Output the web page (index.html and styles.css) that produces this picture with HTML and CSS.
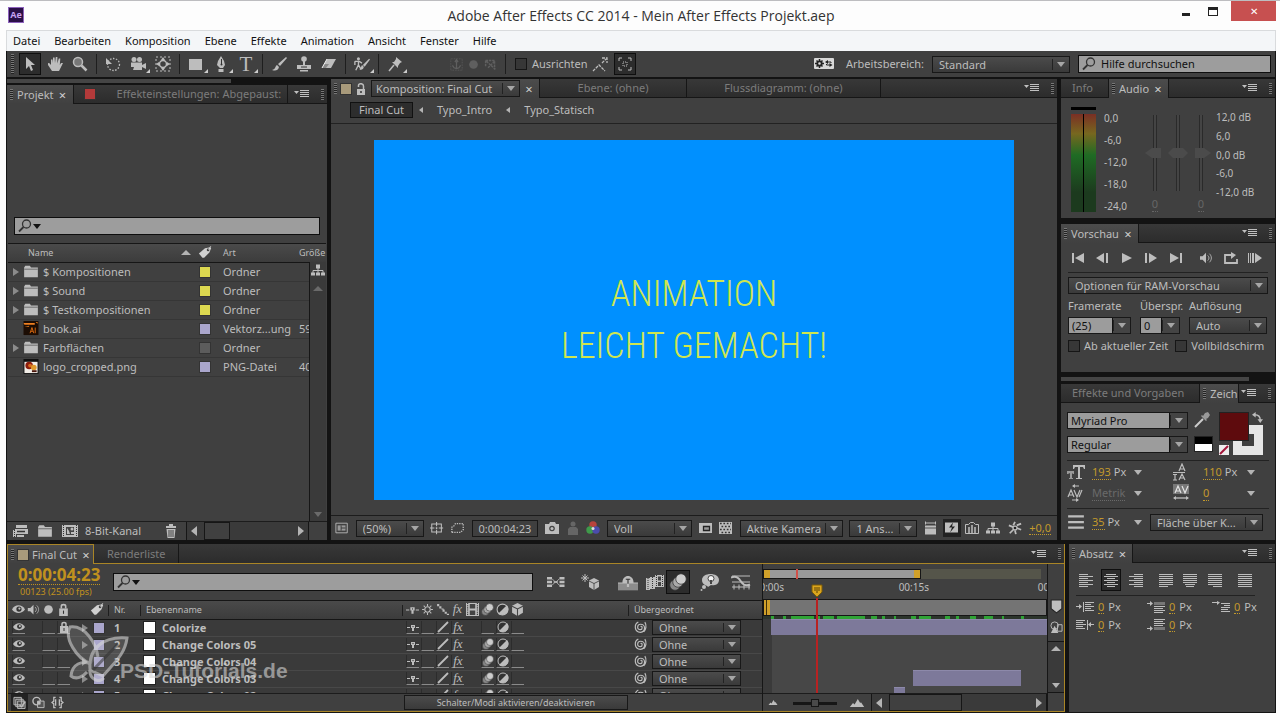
FILE: index.html
```html
<!DOCTYPE html>
<html lang="de">
<head>
	<meta charset="utf-8">
	<title>Adobe After Effects CC 2014 - Mein After Effects Projekt.aep</title>
	<link rel="stylesheet" href="styles.css">
</head>
<body>
	<!-- icon sprite -->
	<svg class="sprite" aria-hidden="true">
		<symbol id="i-arrow" viewBox="0 0 16 16"><path d="M4 1v12l3-3 2 5 2-1-2-5h4z"/></symbol>
		<symbol id="i-hand" viewBox="0 0 16 16"><path d="M5 15 1 9V7l1.500.3L4 9V3.500h1.500L6 7V1.500h1.600L8 7l.8-6h1.600L10.300 7.500l1.500-5h1.500L12.800 9 14 7h2l-3 6-1 2z"/></symbol>
		<symbol id="i-zoom" viewBox="0 0 16 16"><circle cx="6" cy="6" r="4.500" fill="#777" stroke="currentColor" stroke-width="1.500"/><path d="m9.500 9.500 5 5" stroke="currentColor" stroke-width="2.500"/></symbol>
		<symbol id="i-rotate" viewBox="0 0 16 16"><circle cx="8.500" cy="8.500" r="6" fill="none" stroke="currentColor" stroke-width="1.300" stroke-dasharray="1.500 1.500"/><path d="M1 2v6h6z"/></symbol>
		<symbol id="i-camera" viewBox="0 0 16 16"><circle cx="4" cy="3.500" r="2.500"/><circle cx="9.500" cy="3.500" r="2.500"/><path d="M1 6.500h11V9l4-2v6l-4-2v3H3l1-3H1z"/></symbol>
		<symbol id="i-pan" viewBox="0 0 16 16"><path d="M1 1h14v14H1z" fill="none" stroke="currentColor" stroke-dasharray="2 2"/><circle cx="8" cy="8" r="3.500" fill="none" stroke="currentColor" stroke-width="1.500"/><path d="m8 1 2 3H6zM8 15l2-3H6zM1 8l3-2v4zM15 8l-3-2v4z"/></symbol>
		<symbol id="i-rect" viewBox="0 0 16 16"><path d="M1 3h13v11H1z"/></symbol>
		<symbol id="i-pen" viewBox="0 0 16 16"><path d="M8 0 5 5l-1 4 3 3h3l2-3-1-4zM5.500 13h5v3h-5z"/><path d="M8.500 3v5" stroke="#333"/><circle cx="8.500" cy="8.500" r="1" fill="#333"/></symbol>
		<symbol id="i-brush" viewBox="0 0 16 16"><path d="M15 1 7 8l2 2 7-8zM6 9c-2 1-1 4-5 5 3 1 6 1 7-3z"/></symbol>
		<symbol id="i-stamp" viewBox="0 0 16 16"><circle cx="8" cy="3" r="2.800"/><path d="M7 5h2v4H7zM1 9h14v4H1zM4 14h8v1.500H4z"/><path d="M5 11h6" stroke="#333"/></symbol>
		<symbol id="i-eraser" viewBox="0 0 16 16"><path d="M6 3h9l-5 9H1z"/><path d="m3 8h5l-3 4H1z" fill="#8a8a8a"/><path d="m6 3-5 9" stroke="#eee"/></symbol>
		<symbol id="i-roto" viewBox="0 0 18 16"><circle cx="5" cy="2" r="1.700"/><path d="M1 5h5l3 2M5 4v5l-3 6M5 9l3 5M1 5v4" fill="none" stroke="currentColor" stroke-width="1.500"/><path d="M17 2 10 9l2 2 6-8zM9 9c-1 1-1 4-3 5 2 1 5 0 5-3z"/></symbol>
		<symbol id="i-pin" viewBox="0 0 16 16"><path d="m9 1 6 5-2 1-2 3v2L5 6h2l2-3z"/><path d="m7 9-5 6" stroke="currentColor" stroke-width="1.500"/></symbol>
		<symbol id="i-axis" viewBox="0 0 16 16"><path d="M1 1h14v14H1z" fill="none" stroke="currentColor" stroke-dasharray="1 1"/><path d="M8 13V4M6 5l2-3 2 3M3 9l2 3 3 1 3-1 2-3" fill="none" stroke="currentColor" stroke-width="1.500"/></symbol>
		<symbol id="i-axis2" viewBox="0 0 16 16"><path d="M2 3h11v11M2 3v8M3 4l11 10M5 12l8-8" fill="none" stroke="currentColor" stroke-width="1.800" stroke-dasharray="3 1"/></symbol>
		<symbol id="i-snap" viewBox="0 0 16 16"><path d="m10 7 4-4M10 2h5v5M1 15l6-6 6 6" fill="none" stroke="currentColor" stroke-width="1.300" stroke-dasharray="3 1"/></symbol>
		<symbol id="i-snapbox" viewBox="0 0 16 16"><path d="M2 5V2h3M11 2h3v3M14 11v3h-3M5 14H2v-3" fill="none" stroke="currentColor"/><path d="M6 6h4v4H6z" fill="none" stroke="currentColor" stroke-dasharray="1 1"/></symbol>
		<symbol id="i-sync" viewBox="0 0 20 12"><rect width="20" height="11" rx="1" fill="#d8d8d8"/><path d="M5.500 1v9M1 5.500h9M2.500 2.500l6 6M8.500 2.500l-6 6" stroke="#222" stroke-width="1.500"/><circle cx="5.500" cy="5.500" r="2.200" fill="#ddd" stroke="#222" stroke-width="1.800"/><path d="m11 4 3-2v4zM18.500 7l-3-2v4z" fill="#222"/><path d="M13 4h4v1M16.500 7h-4V6" fill="none" stroke="#222"/></symbol>
		<symbol id="i-search" viewBox="0 0 16 16"><circle cx="9.500" cy="6" r="4" fill="none" stroke="currentColor" stroke-width="1.300"/><path d="m6.500 9-4.500 4.500" stroke="currentColor" stroke-width="1.800"/></symbol>
		<symbol id="i-menu" viewBox="0 0 16 10"><path d="M0 2h5L2.500 5z"/><path d="M6 1.500h9M6 3.500h9M6 5.500h9M6 7.500h9" stroke="currentColor"/></symbol>
		<symbol id="i-unlock" viewBox="0 0 12 12"><path d="M2 6h8v6H2z"/><path d="M3.500 4V2.500C3.500 0 8.500 0 8.500 3v3" fill="none" stroke="currentColor" stroke-width="1.500"/><path d="M6 8v2" stroke="#333" stroke-width="1.500"/></symbol>
		<symbol id="i-lock" viewBox="0 0 12 12"><path d="M2 5h8v7H2z"/><path d="M4 5V3c0-2 4-2 4 0v2" fill="none" stroke="currentColor" stroke-width="1.500"/><path d="M6 7v3" stroke="#333"/></symbol>
		<symbol id="i-folder" viewBox="0 0 14 12"><path d="M1 2.500 2 1h4l1 1.500h6V11H1z"/><path d="M1 4h12" stroke="#777"/></symbol>
		<symbol id="i-tag" viewBox="0 0 16 14"><path d="M1 8 8 2l6-1 1 1-2 5-6 6H5z"/><circle cx="11.500" cy="4" r="1.500" fill="#444"/><path d="M12 4c2-1 1-4 3-4" fill="none" stroke="currentColor"/></symbol>
		<symbol id="i-flow" viewBox="0 0 14 13"><path d="M5 1h4v4H5zM0 9h4v3H0zM5 9h4v3H5zM10 9h4v3h-4z"/><path d="M7 4v6M2 10V7h10v3" fill="none" stroke="currentColor"/></symbol>
		<symbol id="i-ai" viewBox="0 0 16 16"><path d="M0 0h16v15H0z" fill="#1c0d04"/><path d="M0 2h12v2H1zM13 1h2v2zM1 6l5-1v1z" fill="#f08020"/><path d="m7 13 2-6 2 6M8 11h2M12.500 7v6" fill="none" stroke="#e06c10"/></symbol>
		<symbol id="i-png" viewBox="0 0 16 16"><path d="M0 0h16v16H0z" fill="#111"/><path d="M1 3h14v12H1z" fill="#f2eee8"/><circle cx="6" cy="7" r="4" fill="#8c1d0c"/><circle cx="7" cy="7" r="2" fill="#d86a1e"/><circle cx="11" cy="9" r="3" fill="#e09a2c"/><path d="M9 12h5v2H9z" fill="#4a160c"/></symbol>
		<symbol id="i-interpret" viewBox="0 0 16 14"><path d="M4 1h11v3H4zM3 5h13v5H3z"/><path d="M5 7.500h8" stroke="#333" stroke-width="1.500"/><path d="M1 6h3v7H1zM5 11h7v2H5z"/><path d="M2.500 6v7" stroke="#333" stroke-dasharray="1 1"/></symbol>
		<symbol id="i-newcomp" viewBox="0 0 16 12"><path d="M0 0h16v12H0z"/><path d="M1.500 0v12M14.500 0v12" stroke="#333" stroke-dasharray="1 1"/><path d="M4 2h8v8H4z" fill="#444"/><circle cx="10" cy="4" r="1.500"/><path d="m5 3 2 3 1 3H5zM9 7h3v2H9z"/></symbol>
		<symbol id="i-trash" viewBox="0 0 12 14"><path d="M1 2h10v2H1zM4 0h4v2H4zM1.500 5h9l-1 9h-7z"/><path d="M4 6v7M6 6v7M8 6v7" stroke="#444"/></symbol>
		<symbol id="i-view" viewBox="0 0 16 14"><path d="M1 1.500h13v11H1z" fill="none" stroke="currentColor"/><path d="M3 4h9v6H3z" fill="#999"/><path d="M7 4v6M7 7h5" stroke="#333"/></symbol>
		<symbol id="i-grid" viewBox="0 0 16 14"><path d="M2 2.500h11v9H2zM7.500 0v5M7.500 9v5M0 7h5M10 7h5M7.500 6v2M6.500 7h2" fill="none" stroke="currentColor" stroke-width="1.200"/></symbol>
		<symbol id="i-mask" viewBox="0 0 16 14"><path d="M1 12V6l2-1 2-3h9v7l-3 3z" fill="none" stroke="currentColor" stroke-width="1.500" stroke-dasharray="1.500 1.200"/></symbol>
		<symbol id="i-photo" viewBox="0 0 14 12"><path d="M0 2h4l1-2h5l1 2h3v10H0z"/><circle cx="7" cy="6.500" r="2.800" fill="#444"/><circle cx="7" cy="6.500" r="1.500"/></symbol>
		<symbol id="i-person" viewBox="0 0 12 14"><circle cx="6" cy="3" r="2.500"/><path d="M1 14V8l2-2h6l2 2v6z"/></symbol>
		<symbol id="i-rgb" viewBox="0 0 14 14"><circle cx="7" cy="4" r="3.700" fill="#b8433c"/><circle cx="4" cy="9" r="3.700" fill="#3f9a4a"/><circle cx="10" cy="9" r="3.700" fill="#4b4cab"/><circle cx="7" cy="7.500" r="1.500" fill="#ddd"/></symbol>
		<symbol id="i-roi" viewBox="0 0 14 12"><path d="M0 1h13v10H0z"/><path d="M4.500 4.500h6v4h-6z" fill="#999" stroke="#222" stroke-width="1.300"/></symbol>
		<symbol id="i-checker" viewBox="0 0 14 12"><path d="M0 0h13v12H0z"/><path d="M1 1.500h11M2.500 4.500h10M1 7.500h11M2.500 10.500h10" stroke="#333" stroke-width="1.700" stroke-dasharray="1.700 1.700"/></symbol>
		<symbol id="i-render" viewBox="0 0 14 13"><path d="M1 4h11v9H1z"/><path d="M1.500 0v3M11.500 0v3M1 1.500h11" stroke="currentColor"/><path d="M1 6.500h11" stroke="#555"/></symbol>
		<symbol id="i-fast" viewBox="0 0 14 13"><path d="M0 1h13v10H0z"/><path d="m8 1-4 5h3l-2 5 5-6H7z" fill="#222"/></symbol>
		<symbol id="i-chart" viewBox="0 0 14 12"><path d="M.5 2.500h3l2-2h3l2 2h3v9H.5z" fill="none" stroke="currentColor"/><path d="M4 5v6M7 3v8M10 5v6" stroke="currentColor" stroke-width="1.500"/></symbol>
		<symbol id="i-shutter" viewBox="0 0 16 16"><circle cx="8" cy="8" r="3"/><path d="M8 1 6 5M15 3l-5 2M15 10l-5-2M9 15l-1-4M2 14l4-4M1 5l5 2" stroke="currentColor" stroke-width="2"/><circle cx="8" cy="8" r="1.500" fill="#222"/></symbol>
		<symbol id="i-eye" viewBox="0 0 14 12"><path d="M0 6c3-6 11-6 14 0-3 5-11 5-14 0z"/><circle cx="7.500" cy="5.500" r="2.800" fill="#333"/><circle cx="8" cy="5" r="1.200"/></symbol>
		<symbol id="i-sound" viewBox="0 0 16 14"><path d="M1 5h3l4-4v12L4 9H1z"/><path d="M10 4c2 2 2 4 0 6M12 2c3 3 3 7 0 10" fill="none" stroke="currentColor"/></symbol>
		<symbol id="i-dot" viewBox="0 0 12 12"><circle cx="6" cy="6" r="4"/></symbol>
		<symbol id="i-shy" viewBox="0 0 12 12"><path d="M0 6h3v1H0zM9 6h3v1H9zM4 4h4v3H7v3H5V7H4z"/><path d="M5.500 5h1v1h-1z" fill="#333"/></symbol>
		<symbol id="i-sun" viewBox="0 0 12 12"><circle cx="6" cy="6" r="2.500" fill="none" stroke="currentColor"/><path d="M6 1v2M6 9v2M1 6h2M9 6h2M2.500 2.500l1 1M8.500 8.500l1 1M9.500 2.500l-1 1M3.500 8.500l-1 1" stroke="currentColor"/></symbol>
		<symbol id="i-steps" viewBox="0 0 12 12"><path d="M1 1h2v2H1zM3 3h2v2H3zM5 5h2v1H5zM6 6h2v2H6zM8 8h2v2H8zM10 10h2v1h-2z"/></symbol>
		<symbol id="i-slash" viewBox="0 0 12 12"><path d="M1 11 11 1" stroke="currentColor" stroke-width="1.800"/></symbol>
		<symbol id="i-film" viewBox="0 0 12 12"><path d="M0 0h12v12H0z"/><path d="M1.500 0v12M10.500 0v12" stroke="#333" stroke-dasharray="1 1"/><path d="M3.500 1h5v4h-5zM3.500 7h5v4h-5z" fill="#444"/></symbol>
		<symbol id="i-blur" viewBox="0 0 12 12"><circle cx="4" cy="8" r="3.500" fill="#888" stroke="#333" stroke-width=".5"/><circle cx="6" cy="6" r="3.500" fill="#aaa" stroke="#333" stroke-width=".5"/><circle cx="8" cy="4" r="3.500" fill="#ccc" stroke="#333" stroke-width=".5"/></symbol>
		<symbol id="i-adjust" viewBox="0 0 12 12"><circle cx="6" cy="6" r="5" fill="#333" stroke="currentColor"/><path d="M2 10 10 2c3 3 1 9-4 9-2 0-3 0-4-1z"/></symbol>
		<symbol id="i-cube" viewBox="0 0 12 12"><path d="m6 0 5 2.500v6.500L6 12 1 9V2.500z"/><path d="m1 3 5 2.500L11 3M6 5.500V12" fill="none" stroke="#444"/></symbol>
		<symbol id="i-whip" viewBox="0 0 12 12"><path d="M6 5c2-1 2 3 0 3-4 0-3-5 0-5 5 0 5 7 0 7.500C0 10 0 3 4 1M10 1c2 3 1 7-1 9" fill="none" stroke="currentColor" stroke-width="1.100"/></symbol>
		<symbol id="i-mini" viewBox="0 0 24 14"><path d="M0 1h6v3H0zM0 5.500h6v3H0zM0 10h6v3H0zM15 1h6v3h-6zM15 5.500h6v3h-6zM15 10h6v3h-6zM8 6h5v2H8z"/><path d="m6 3 4 4-4 4M15 3l-4 4 4 4" fill="none" stroke="currentColor"/></symbol>
		<symbol id="i-draft" viewBox="0 0 20 18"><path d="m13 5 5 2.500V14l-5 3-5-3V7.500z"/><path d="m8 8 5 2.500L18 8M13 10v7" fill="none" stroke="#555"/><path d="M4 1v8M0 5h8M1.500 2.500l5 5M6.500 2.500l-5 5" stroke="currentColor"/></symbol>
		<symbol id="i-hide" viewBox="0 0 18 15"><path d="M0 9h18v6H0z" fill="#8c8c8c"/><path d="M4 8c0-8 10-8 10 0zM8 8h2v4H8zM0 8h18v1H0z"/><path d="M7 5h4M9 5v4" stroke="#333"/></symbol>
		<symbol id="i-blend" viewBox="0 0 20 16"><path d="M1 4h4v12H1zM5 3h5v12H5zM10 1h9v12h-9z"/><path d="M3 4v12M7.500 3v12M11.500 1v12M17.500 1v12" stroke="#333" stroke-dasharray="1 1"/><path d="M13 2.500h3v4h-3zM13 8h3v4h-3z" fill="#444"/></symbol>
		<symbol id="i-brain" viewBox="0 0 20 18"><path d="M2 7c0-8 17-8 17 0 0 5-6 6-8 5l-3 2c-1-2-6-2-6-7z"/><circle cx="4" cy="14" r="2"/><circle cx="1.500" cy="17" r="1"/><circle cx="11" cy="5.500" r="3" fill="#f4f4f4" stroke="#444"/><path d="M11 7v4" stroke="#444" stroke-width="2"/></symbol>
		<symbol id="i-graph" viewBox="0 0 20 15"><path d="M1 1.500h18M1 7.500h18M1 12.500h18M3 10v5M8 10v5M13 10v5M18 10v5" stroke="currentColor"/><path d="M0 3c6-2 8 1 10 4s5 5 9 3" fill="none" stroke="currentColor" stroke-width="2"/></symbol>
		<symbol id="i-hills" viewBox="0 0 18 10"><path d="m0 10 4-5 2 2 4-7 3 5 1-1 4 6z"/></symbol>
		<symbol id="i-marker" viewBox="0 0 12 14"><path d="M1 1h10v8l-5 4-5-4z" stroke="#222"/></symbol>
		<symbol id="i-shapes" viewBox="0 0 14 14"><circle cx="5" cy="5" r="4" fill="none" stroke="currentColor"/><path d="M8 4h5v7H8z" fill="none" stroke="currentColor"/><path d="m5 5 4 8H1z"/></symbol>
		<symbol id="i-pane" viewBox="0 0 14 13"><path d="M1 1h8v8H1zM3 3h8v8H3zM5 5h8v8H5z" fill="#444" stroke="currentColor"/><path d="m7 9 2 2 4-5" fill="none" stroke="currentColor" stroke-width="1.500"/></symbol>
		<symbol id="i-modes" viewBox="0 0 14 13"><circle cx="5" cy="5" r="4" fill="none" stroke="currentColor" stroke-width="1.500"/><path d="M6 5h7v7H6z" fill="#555" stroke="currentColor"/><circle cx="7.500" cy="7" r="2"/></symbol>
		<symbol id="i-braces" viewBox="0 0 14 13"><path d="M5 1H3v4L1 6.500 3 8v4h2M9 1h2v4l2 1.500L11 8v4H9M5 3v7M9 3v7" fill="none" stroke="currentColor" stroke-width="1.400"/></symbol>
		<symbol id="i-first" viewBox="0 0 14 12"><path d="M1 1h2v10H1zM13 1v10L4 6z"/></symbol>
		<symbol id="i-prev" viewBox="0 0 14 12"><path d="M9 1v10L1 6zM11 1h2v10h-2z"/></symbol>
		<symbol id="i-play" viewBox="0 0 14 12"><path d="m2 1 10 5-10 5z"/></symbol>
		<symbol id="i-next" viewBox="0 0 14 12"><path d="M1 1h2v10H1zM5 1l8 5-8 5z"/></symbol>
		<symbol id="i-last" viewBox="0 0 14 12"><path d="m1 1 9 5-9 5zM11 1h2v10h-2z"/></symbol>
		<symbol id="i-loop" viewBox="0 0 14 12"><path d="M1 6v5h12V7M1 6V3h6" fill="none" stroke="currentColor" stroke-width="1.800"/><path d="m7 0 5 3-5 4z"/></symbol>
		<symbol id="i-ram" viewBox="0 0 14 12"><path d="M0 1h1v10H0zM2 1h1v10H2zM4 1h2v10H4zM7 1l7 5-7 5z"/></symbol>
		<symbol id="i-dropper" viewBox="0 0 16 16"><path d="m9 4 2-3 3-1 2 3-2 3-2 1 1 1-1 1-5-5 1-1z" fill="#999"/><path d="m9 7-6 6-2 2" fill="none" stroke="#ccc" stroke-width="2"/></symbol>
		<symbol id="i-swap" viewBox="0 0 12 12"><path d="M3 3c4 0 6 2 6 6" fill="none" stroke="currentColor" stroke-width="1.500"/><path d="M4 0v6L0 3zM6 8h6l-3 4z"/></symbol>
		<symbol id="i-none" viewBox="0 0 10 10"><path d="M0 0h10v10H0z" fill="#eee"/><path d="M1 9 9 1" stroke="#a3153a" stroke-width="2"/></symbol>
		<symbol id="i-kern" viewBox="0 0 18 18"><path d="m1 13 3-7 3 7M2 11h4M7 6l3 7 3-7M15 6l-3 7M6 2h6M5 16h6" fill="none" stroke="currentColor" stroke-width="1.200"/><path d="m5 2 3-2v4zM12 16l-3-2v4z"/></symbol>
		<symbol id="i-track" viewBox="0 0 18 18"><path d="M1 0h16v10H1z" fill="#777"/><path d="m3 9 3-7 3 7M4 7h4M10 2l3 7 3-7M2 14h14" fill="none" stroke="#e4e4e4" stroke-width="1.200"/><path d="m1 14 3-2v4zM17 14l-3-2v4z"/></symbol>
		<symbol id="i-lead" viewBox="0 0 18 18"><path d="m7 8 3-7 3 7M8 6h4M1 9.500h12M3 11v6M1 11.500h4M1 17h4M7 17l3-6 3 6M8 15h4" fill="none" stroke="currentColor" stroke-width="1.200"/></symbol>
		<symbol id="i-size" viewBox="0 0 18 16"><path d="M6 1h12v4h-1l-1-2h-3v11h2v1H9v-1h2V3H8L7 5H6z"/><path d="M0 7h7v3H6L5 9v5h1v1H2v-1h1V9L1 10H0z" fill="#999"/></symbol>
		<symbol id="i-lines" viewBox="0 0 16 14"><path d="M1 2h14M1 7h14M1 12h14" stroke="currentColor" stroke-width="2"/></symbol>
		<symbol id="i-left" viewBox="0 0 16 15"><path d="M1 1.500h9M1 3.500h14M1 5.500h9M1 7.500h14M1 9.500h9M1 11.500h14M1 13.500h9" stroke="currentColor"/></symbol>
		<symbol id="i-center" viewBox="0 0 16 15"><path d="M3 1.500h10M1 3.500h14M4 5.500h8M1 7.500h14M4 9.500h8M1 11.500h14M4 13.500h8" stroke="currentColor"/></symbol>
		<symbol id="i-right" viewBox="0 0 16 15"><path d="M6 1.500h9M1 3.500h14M6 5.500h9M1 7.500h14M6 9.500h9M1 11.500h14M6 13.500h9" stroke="currentColor"/></symbol>
		<symbol id="i-jleft" viewBox="0 0 16 15"><path d="M1 1.500h14M1 3.500h14M1 5.500h14M1 7.500h14M1 9.500h14M1 11.500h14M1 13.500h9" stroke="currentColor"/></symbol>
		<symbol id="i-jcenter" viewBox="0 0 16 15"><path d="M1 1.500h14M1 3.500h14M1 5.500h14M1 7.500h14M1 9.500h14M3 11.500h10M4 13.500h8" stroke="currentColor"/></symbol>
		<symbol id="i-jright" viewBox="0 0 16 15"><path d="M1 1.500h14M1 3.500h14M1 5.500h14M1 7.500h14M1 9.500h14M1 11.500h14M6 13.500h9" stroke="currentColor"/></symbol>
		<symbol id="i-jall" viewBox="0 0 16 15"><path d="M1 1.500h14M1 3.500h14M1 5.500h14M1 7.500h14M1 9.500h14M1 11.500h14M1 13.500h14" stroke="currentColor"/></symbol>
		<symbol id="i-indl" viewBox="0 0 18 12"><path d="M0 5.500h5M7.500 1v10M9 1.500h9M9 3.500h6M9 5.500h9M9 7.500h6M9 9.500h9" stroke="currentColor"/><path d="m3 3 3 2.500L3 8z"/></symbol>
		<symbol id="i-indr" viewBox="0 0 18 12"><path d="M13 5.500h5M11.500 1v10M0 1.500h9M0 3.500h7M0 5.500h10M0 7.500h7M0 9.500h9" stroke="currentColor"/><path d="m15 3-3 2.500L15 8z"/></symbol>
		<symbol id="i-before" viewBox="0 0 18 12"><path d="M0 2.500h5M7 5.500h11M7 7.500h9M7 9.500h11M7 11.500h9" stroke="currentColor"/><path d="M7 1h11v3H7z" fill="#777"/><path d="m3 0 3 2.500L3 5z"/></symbol>
		<symbol id="i-after" viewBox="0 0 18 12"><path d="M0 9.500h5M7 .5h11M7 2.500h9M7 4.500h11M7 6.500h9" stroke="currentColor"/><path d="M7 8h11v3H7z" fill="#777"/><path d="m3 7 3 2.500L3 12z"/></symbol>
		<symbol id="i-first-line" viewBox="0 0 18 12"><path d="M0 1.500h7M9 2.500h9M12 4.500h6M9 6.500h9M9 8.500h7M9 10.500h9" stroke="currentColor"/><path d="m5 0 3 1.500L5 4z"/></symbol>
	</svg>

	<div class="window">
		<header class="titlebar">
			<span class="logo">Ae</span>
			<h1>Adobe After Effects CC 2014 - Mein After Effects Projekt.aep</h1>
			<div class="winbtns">
				<button class="min" aria-label="Minimieren"></button>
				<button class="max" aria-label="Maximieren"></button>
				<button class="close" aria-label="Schließen">✕</button>
			</div>
		</header>
		<nav class="menubar">
			<a href="#">Datei</a>
			<a href="#">Bearbeiten</a>
			<a href="#">Komposition</a>
			<a href="#">Ebene</a>
			<a href="#">Effekte</a>
			<a href="#">Animation</a>
			<a href="#">Ansicht</a>
			<a href="#">Fenster</a>
			<a href="#">Hilfe</a>
		</nav>

		<div class="app">
			<div class="toolbar">
				<i class="grip"></i>
				<div class="tools">
					<button class="on" aria-label="Auswahl"><svg><use href="#i-arrow"/></svg></button>
					<button aria-label="Hand"><svg><use href="#i-hand"/></svg></button>
					<button aria-label="Zoom"><svg><use href="#i-zoom"/></svg></button>
					<i class="sep"></i>
					<button aria-label="Drehen"><svg><use href="#i-rotate"/></svg></button>
					<button class="more" aria-label="Kamera"><svg><use href="#i-camera"/></svg></button>
					<button aria-label="Ausschnitt"><svg><use href="#i-pan"/></svg></button>
					<i class="sep"></i>
					<button class="more" aria-label="Rechteck"><svg><use href="#i-rect"/></svg></button>
					<button class="more" aria-label="Zeichenstift"><svg><use href="#i-pen"/></svg></button>
					<button class="more texttool" aria-label="Text">T</button>
					<i class="sep"></i>
					<button aria-label="Pinsel"><svg><use href="#i-brush"/></svg></button>
					<button aria-label="Kopierstempel"><svg><use href="#i-stamp"/></svg></button>
					<button aria-label="Radiergummi"><svg><use href="#i-eraser"/></svg></button>
					<i class="sep"></i>
					<button class="more" aria-label="Roto-Pinsel"><svg><use href="#i-roto"/></svg></button>
					<i class="sep"></i>
					<button class="more" aria-label="Marionette"><svg><use href="#i-pin"/></svg></button>
				</div>
				<div class="axes">
					<svg><use href="#i-axis"/></svg>
					<svg><use href="#i-dot"/></svg>
					<svg><use href="#i-axis2"/></svg>
				</div>
				<i class="sep"></i>
				<label class="check"><input type="checkbox"> Ausrichten</label>
				<div class="tools snap">
					<button aria-label="Kanten"><svg><use href="#i-snap"/></svg></button>
					<button class="on" aria-label="Einrasten"><svg><use href="#i-snapbox"/></svg></button>
				</div>
				<div class="workspace">
					<svg class="sync"><use href="#i-sync"/></svg>
					<label for="ws">Arbeitsbereich:</label>
					<span class="dd"><select id="ws"><option>Standard</option></select></span>
					<span class="search"><svg><use href="#i-search"/></svg><input type="text" value="Hilfe durchsuchen" aria-label="Hilfe"></span>
				</div>
			</div>

			<main class="upper">
				<!-- Projekt -->
				<div class="col">
					<div class="strip"><i></i></div>
					<section class="panel project">
						<div class="tabs">
							<span class="tab active"><i class="grip"></i>Projekt<button class="x" aria-label="Schließen">×</button></span>
							<span class="tab fx"><i class="chip red"></i>Effekteinstellungen: Abgepaust:</span>
							<button class="pmenu" aria-label="Menü"><svg><use href="#i-menu"/></svg></button>
							<i class="grip end"></i>
						</div>
						<div class="preview"></div>
						<span class="search"><svg><use href="#i-search"/></svg><i class="tri"></i><input type="text" aria-label="Projekt durchsuchen"></span>
						<div class="list">
							<table>
								<colgroup><col class="c-name"><col class="c-label"><col class="c-type"><col class="c-size"></colgroup>
								<thead>
									<tr><th><div class="namehead">Name<i class="tri up"></i></div></th><th><svg class="tag"><use href="#i-tag"/></svg></th><th>Art</th><th>Größe</th></tr>
								</thead>
								<tbody>
									<tr><td><div class="file"><i class="twist"></i><svg><use href="#i-folder"/></svg>$ Kompositionen</div></td><td><i class="chip yellow"></i></td><td>Ordner</td><td></td></tr>
									<tr><td><div class="file"><i class="twist"></i><svg><use href="#i-folder"/></svg>$ Sound</div></td><td><i class="chip yellow"></i></td><td>Ordner</td><td></td></tr>
									<tr><td><div class="file"><i class="twist"></i><svg><use href="#i-folder"/></svg>$ Testkompositionen</div></td><td><i class="chip yellow"></i></td><td>Ordner</td><td></td></tr>
									<tr><td><div class="file"><i class="twist none"></i><svg><use href="#i-ai"/></svg>book.ai</div></td><td><i class="chip lilac"></i></td><td>Vektorz...ung</td><td>59</td></tr>
									<tr><td><div class="file"><i class="twist"></i><svg><use href="#i-folder"/></svg>Farbflächen</div></td><td><i class="chip grey"></i></td><td>Ordner</td><td></td></tr>
									<tr><td><div class="file"><i class="twist none"></i><svg><use href="#i-png"/></svg>logo_cropped.png</div></td><td><i class="chip lilac"></i></td><td>PNG-Datei</td><td>40</td></tr>
								</tbody>
							</table>
							<div class="scrolly">
								<svg><use href="#i-flow"/></svg>
								<i class="tri up"></i>
								<i class="tri"></i>
							</div>
						</div>
						<div class="foot">
							<svg><use href="#i-interpret"/></svg>
							<svg><use href="#i-folder"/></svg>
							<svg><use href="#i-newcomp"/></svg>
							<span>8-Bit-Kanal</span>
							<svg class="trash"><use href="#i-trash"/></svg>
							<div class="scrollx"><i class="tri lt"></i><i class="thumb"></i><i class="tri rt"></i></div>
						</div>
					</section>
				</div>

				<!-- Komposition -->
				<section class="panel comp">
					<div class="tabs">
						<span class="tab active">
							<i class="grip"></i><i class="chip tan"></i><svg class="lock"><use href="#i-unlock"/></svg>
							<span class="dd"><select aria-label="Komposition"><option>Komposition: Final Cut</option></select></span>
							<button class="x" aria-label="Schließen">×</button>
						</span>
						<span class="tab">Ebene: (ohne)</span>
						<span class="tab wide">Flussdiagramm: (ohne)</span>
						<button class="pmenu" aria-label="Menü"><svg><use href="#i-menu"/></svg></button>
						<i class="grip end"></i>
					</div>
					<div class="crumbs">
						<a class="here" href="#">Final Cut</a><i class="tri lt"></i>
						<a href="#">Typo_Intro</a><i class="tri lt"></i>
						<a href="#">Typo_Statisch</a>
					</div>
					<div class="viewer">
						<div class="canvas"><p>ANIMATION<br>LEICHT GEMACHT!</p></div>
					</div>
					<div class="foot">
						<svg><use href="#i-view"/></svg>
						<span class="dd zoomsel"><select aria-label="Zoom"><option>(50%)</option></select></span>
						<svg><use href="#i-grid"/></svg>
						<svg><use href="#i-mask"/></svg>
						<button class="time">0:00:04:23</button>
						<svg><use href="#i-photo"/></svg>
						<svg class="off"><use href="#i-person"/></svg>
						<svg><use href="#i-rgb"/></svg>
						<span class="dd ressel"><select aria-label="Auflösung"><option>Voll</option></select></span>
						<svg><use href="#i-roi"/></svg>
						<svg><use href="#i-checker"/></svg>
						<span class="dd camsel"><select aria-label="Ansicht"><option>Aktive Kamera</option></select></span>
						<span class="dd viewsel"><select aria-label="Layout"><option>1 Ans...</option></select></span>
						<svg><use href="#i-render"/></svg>
						<svg class="boxed"><use href="#i-fast"/></svg>
						<svg><use href="#i-chart"/></svg>
						<svg><use href="#i-flow"/></svg>
						<svg class="shutter"><use href="#i-shutter"/></svg>
						<a class="val" href="#">+0,0</a>
					</div>
				</section>

				<div class="col side">
					<section class="panel audio">
						<div class="tabs">
							<span class="tab">Info</span>
							<span class="tab active"><i class="grip"></i>Audio<button class="x" aria-label="Schließen">×</button></span>
							<button class="pmenu" aria-label="Menü"><svg><use href="#i-menu"/></svg></button>
							<i class="grip end"></i>
						</div>
						<div class="mixer">
							<div class="meter"><i class="peak"></i><i class="bar"></i></div>
							<div class="scale"><span>0,0</span><span>-6,0</span><span>-12,0</span><span>-18,0</span><span>-24,0</span></div>
							<div class="faders">
								<label><input class="l" type="range" aria-label="Links"><span>0</span></label>
								<label><input class="m" type="range" aria-label="Beide"></label>
								<label><input class="r" type="range" aria-label="Rechts"><span>0</span></label>
							</div>
							<div class="scale db"><span>12,0 dB</span><span>6,0</span><span>0,0 dB</span><span>-6,0</span><span>-12,0 dB</span></div>
						</div>
					</section>

					<section class="panel vorschau">
						<div class="tabs">
							<span class="tab active"><i class="grip"></i>Vorschau<button class="x" aria-label="Schließen">×</button></span>
							<button class="pmenu" aria-label="Menü"><svg><use href="#i-menu"/></svg></button>
							<i class="grip end"></i>
						</div>
						<div class="body">
							<div class="transport">
								<button aria-label="Anfang"><svg><use href="#i-first"/></svg></button>
								<button aria-label="Zurück"><svg><use href="#i-prev"/></svg></button>
								<button aria-label="Abspielen"><svg><use href="#i-play"/></svg></button>
								<button aria-label="Weiter"><svg><use href="#i-next"/></svg></button>
								<button aria-label="Ende"><svg><use href="#i-last"/></svg></button>
								<button aria-label="Ton"><svg><use href="#i-sound"/></svg></button>
								<button aria-label="Schleife"><svg><use href="#i-loop"/></svg></button>
								<button aria-label="RAM-Vorschau"><svg><use href="#i-ram"/></svg></button>
							</div>
							<span class="dd"><select aria-label="Optionen"><option>Optionen für RAM-Vorschau</option></select></span>
							<div class="fields">
								<label for="fr">Framerate</label><label for="skip">Überspr.</label><label for="res">Auflösung</label>
								<span class="dd light"><select id="fr"><option>(25)</option></select></span>
								<span class="dd light"><select id="skip"><option>0</option></select></span>
								<span class="dd"><select id="res"><option>Auto</option></select></span>
							</div>
							<div class="checks">
								<label class="check"><input type="checkbox"> Ab aktueller Zeit</label>
								<label class="check"><input type="checkbox"> Vollbildschirm</label>
							</div>
						</div>
					</section>

					<div class="strip"><i></i></div>
					<section class="panel zeichen">
						<div class="tabs">
							<span class="tab">Effekte und Vorgaben</span>
							<span class="tab active"><i class="grip"></i>Zeich</span>
							<button class="pmenu" aria-label="Menü"><svg><use href="#i-menu"/></svg></button>
							<i class="grip end"></i>
						</div>
						<div class="body">
							<div class="font">
								<div class="fontsel">
									<span class="dd light"><select aria-label="Schrift"><option>Myriad Pro</option></select></span>
									<span class="dd light"><select aria-label="Schnitt"><option>Regular</option></select></span>
								</div>
								<div class="picks"><svg><use href="#i-dropper"/></svg><i class="bw"></i></div>
								<div class="colors">
									<i class="stroke"></i><i class="fill"></i>
									<svg class="swap"><use href="#i-swap"/></svg><svg class="nofill"><use href="#i-none"/></svg>
								</div>
							</div>
							<div class="metrics">
								<svg><use href="#i-size"/></svg><span><a class="val" href="#">193</a> Px</span><i class="tri"></i>
								<svg><use href="#i-lead"/></svg><span><a class="val" href="#">110</a> Px</span><i class="tri"></i>
								<svg><use href="#i-kern"/></svg><span><a class="val dim" href="#">Metrik</a></span><i class="tri"></i>
								<svg><use href="#i-track"/></svg><span><a class="val" href="#">0</a></span><i class="tri"></i>
							</div>
							<div class="metrics stroke-row">
								<svg><use href="#i-lines"/></svg><span><a class="val" href="#">35</a> Px</span><i class="tri"></i>
								<span class="dd"><select aria-label="Kontur"><option>Fläche über K...</option></select></span>
							</div>
						</div>
					</section>
				</div>
			</main>

			<div class="lower">
				<!-- Zeitleiste -->
				<section class="panel timeline">
					<div class="tabs">
						<span class="tab active"><i class="grip"></i><i class="chip tan"></i>Final Cut<button class="x" aria-label="Schließen">×</button></span>
						<span class="tab">Renderliste</span>
						<button class="pmenu" aria-label="Menü"><svg><use href="#i-menu"/></svg></button>
						<i class="grip end"></i>
					</div>
					<div class="tl">
						<div class="layers">
							<div class="tlbar">
								<div class="clock"><b>0:00:04:23</b><span>00123 (25.00 fps)</span></div>
								<span class="search"><svg><use href="#i-search"/></svg><i class="tri"></i><input type="text" aria-label="Ebenen durchsuchen"></span>
								<div class="tlicons">
									<button aria-label="Flussdiagramm"><svg><use href="#i-mini"/></svg></button>
									<button aria-label="3D-Entwurf"><svg><use href="#i-draft"/></svg></button>
									<button aria-label="Tarnen"><svg><use href="#i-hide"/></svg></button>
									<button aria-label="Frame-Überblendung"><svg><use href="#i-blend"/></svg></button>
									<button class="on" aria-label="Bewegungsunschärfe"><svg><use href="#i-blur"/></svg></button>
									<button aria-label="Brainstorming"><svg><use href="#i-brain"/></svg></button>
									<button aria-label="Diagrammeditor"><svg><use href="#i-graph"/></svg></button>
								</div>
							</div>
							<div class="layerlist">
								<table>
									<colgroup><col class="l-av"><col class="l-label"><col class="l-nr"><col><col class="l-sw"><col class="l-parent"></colgroup>
									<thead>
										<tr>
											<th><div class="sw"><svg><use href="#i-eye"/></svg><svg><use href="#i-sound"/></svg><svg><use href="#i-dot"/></svg><svg><use href="#i-lock"/></svg></div></th>
											<th class="tagcell"><svg class="tag"><use href="#i-tag"/></svg></th>
											<th>Nr.</th><th>Ebenenname</th>
											<th><div class="sw"><svg><use href="#i-shy"/></svg><svg><use href="#i-sun"/></svg><svg><use href="#i-steps"/></svg><em>fx</em><svg><use href="#i-film"/></svg><svg><use href="#i-blur"/></svg><svg><use href="#i-adjust"/></svg><svg><use href="#i-cube"/></svg></div></th>
											<th>Übergeordnet</th>
										</tr>
									</thead>
									<tbody>
										<tr>
											<td><div class="sw"><svg class="b"><use href="#i-eye"/></svg><i></i><i class="b"></i><svg class="b"><use href="#i-lock"/></svg></div></td>
											<td><div class="lab"><i class="twist"></i><i class="chip lilac"></i></div></td><td>1</td>
											<td><div class="lname"><i class="solid"></i>Colorize</div></td>
											<td><div class="sw"><svg class="b"><use href="#i-shy"/></svg><i class="b"></i><svg class="b"><use href="#i-slash"/></svg><em class="b">fx</em><i></i><i class="b"></i><svg class="b"><use href="#i-adjust"/></svg><i class="b"></i></div></td>
											<td><div class="parent"><svg><use href="#i-whip"/></svg><span class="dd"><select aria-label="Übergeordnet 1"><option>Ohne</option></select></span></div></td>
										</tr>
										<tr>
											<td><div class="sw"><svg class="b"><use href="#i-eye"/></svg><i></i><i class="b"></i><i class="b"></i></div></td>
											<td><div class="lab"><i class="twist"></i><i class="chip lilac"></i></div></td><td>2</td>
											<td><div class="lname"><i class="solid"></i>Change Colors 05</div></td>
											<td><div class="sw"><svg class="b"><use href="#i-shy"/></svg><i class="b"></i><svg class="b"><use href="#i-slash"/></svg><em class="b">fx</em><i></i><svg class="b"><use href="#i-blur"/></svg><svg class="b"><use href="#i-adjust"/></svg><i class="b"></i></div></td>
											<td><div class="parent"><svg><use href="#i-whip"/></svg><span class="dd"><select aria-label="Übergeordnet 2"><option>Ohne</option></select></span></div></td>
										</tr>
										<tr>
											<td><div class="sw"><svg class="b"><use href="#i-eye"/></svg><i></i><i class="b"></i><i class="b"></i></div></td>
											<td><div class="lab"><i class="twist"></i><i class="chip lilac"></i></div></td><td>3</td>
											<td><div class="lname"><i class="solid"></i>Change Colors 04</div></td>
											<td><div class="sw"><svg class="b"><use href="#i-shy"/></svg><i class="b"></i><svg class="b"><use href="#i-slash"/></svg><em class="b">fx</em><i></i><svg class="b"><use href="#i-blur"/></svg><svg class="b"><use href="#i-adjust"/></svg><i class="b"></i></div></td>
											<td><div class="parent"><svg><use href="#i-whip"/></svg><span class="dd"><select aria-label="Übergeordnet 3"><option>Ohne</option></select></span></div></td>
										</tr>
										<tr>
											<td><div class="sw"><svg class="b"><use href="#i-eye"/></svg><i></i><i class="b"></i><i class="b"></i></div></td>
											<td><div class="lab"><i class="twist"></i><i class="chip lilac"></i></div></td><td>4</td>
											<td><div class="lname"><i class="solid"></i>Change Colors 03</div></td>
											<td><div class="sw"><svg class="b"><use href="#i-shy"/></svg><i class="b"></i><svg class="b"><use href="#i-slash"/></svg><em class="b">fx</em><i></i><svg class="b"><use href="#i-blur"/></svg><svg class="b"><use href="#i-adjust"/></svg><i class="b"></i></div></td>
											<td><div class="parent"><svg><use href="#i-whip"/></svg><span class="dd"><select aria-label="Übergeordnet 4"><option>Ohne</option></select></span></div></td>
										</tr>
										<tr>
											<td><div class="sw"><svg class="b"><use href="#i-eye"/></svg><i></i><i class="b"></i><i class="b"></i></div></td>
											<td><div class="lab"><i class="twist"></i><i class="chip lilac"></i></div></td><td>5</td>
											<td><div class="lname"><i class="solid"></i>Change Colors 02</div></td>
											<td><div class="sw"><svg class="b"><use href="#i-shy"/></svg><i class="b"></i><svg class="b"><use href="#i-slash"/></svg><em class="b">fx</em><i></i><svg class="b"><use href="#i-blur"/></svg><svg class="b"><use href="#i-adjust"/></svg><i class="b"></i></div></td>
											<td><div class="parent"><svg><use href="#i-whip"/></svg><span class="dd"><select aria-label="Übergeordnet 5"><option>Ohne</option></select></span></div></td>
										</tr>
									</tbody>
								</table>
								<div class="watermark">
									<svg viewBox="0 0 64 58"><g fill="#d8d8d8" fill-opacity=".25" stroke="#d8d8d8" stroke-width="3"><path d="M25 40C10 34-2 14 4 3c15-2 26 16 28 30"/><path d="M24 46C22 24 38 12 61 14c-2 16-12 24-24 38z"/><path d="M25 40C16 36 6 40 5 52c5 4 12 1 16-4M24 46c-1 8 8 14 14 8"/></g><path d="M27 46 52 20" stroke="#444" stroke-width="3"/></svg>
									<span>PSD-Tutorials.de</span>
								</div>
							</div>
							<div class="foot">
								<svg class="boxed"><use href="#i-pane"/></svg>
								<svg><use href="#i-modes"/></svg>
								<svg><use href="#i-braces"/></svg>
								<button class="toggle">Schalter/Modi aktivieren/deaktivieren</button>
							</div>
						</div>
						<div class="graph">
							<div class="nav"><i class="view"></i><i class="now"></i></div>
							<div class="ruler">
								<span style="left:3%">0:00s</span><span style="left:52%">00:15s</span><span style="left:101%">00:30s</span>
							</div>
							<div class="area"><i class="handle"></i></div>
							<div class="cache">
								<i style="left:3%;width:1%"></i><i style="left:7%;width:1%"></i><i style="left:10%;width:8%"></i><i style="left:19%;width:1%"></i><i style="left:21%;width:4%"></i><i style="left:26%;width:10%"></i><i style="left:38%;width:2%"></i><i style="left:42%;width:1%"></i><i style="left:46%;width:1%"></i><i style="left:52%;width:2%"></i><i style="left:55%;width:4%"></i><i style="left:64%;width:2%"></i><i style="left:68%;width:1%"></i><i style="left:73%;width:2%"></i><i style="left:78%;width:3%"></i><i style="left:84%;width:1%"></i><i style="left:91%;width:1%"></i>
							</div>
							<div class="tracks">
								<i class="clip" style="top:0;left:3%;width:97%"></i>
								<i class="clip" style="top:51px;left:53%;width:38%"></i>
								<i class="clip" style="top:68px;left:46%;width:4%"></i>
							</div>
							<div class="playhead"><svg viewBox="0 0 12 14"><path d="M1 1h10v7l-5 5-5-5z" fill="#dba51e" stroke="#7a5a08"/><path d="M4 3v4M6 3v6M8 3v4" stroke="#5a4206"/></svg><i></i></div>
							<div class="foot">
								<svg class="small"><use href="#i-hills"/></svg>
								<input class="tlzoom" type="range" aria-label="Zeitzoom">
								<svg><use href="#i-hills"/></svg>
								<div class="scrollx"><i class="tri lt"></i><i class="thumb"></i><i class="tri rt"></i></div>
							</div>
						</div>
						<div class="edge">
							<svg><use href="#i-marker"/></svg>
							<svg><use href="#i-shapes"/></svg>
							<div class="rail"><i class="tri up"></i><i class="tri"></i></div>
						</div>
					</div>
				</section>

				<section class="panel absatz">
					<div class="tabs">
						<span class="tab active"><i class="grip"></i>Absatz<button class="x" aria-label="Schließen">×</button></span>
						<button class="pmenu" aria-label="Menü"><svg><use href="#i-menu"/></svg></button>
						<i class="grip end"></i>
					</div>
					<div class="body">
						<div class="aligns">
							<button aria-label="Links"><svg><use href="#i-left"/></svg></button>
							<button class="on" aria-label="Zentriert"><svg><use href="#i-center"/></svg></button>
							<button aria-label="Rechts"><svg><use href="#i-right"/></svg></button>
							<button class="group" aria-label="Blocksatz links"><svg><use href="#i-jleft"/></svg></button>
							<button aria-label="Blocksatz zentriert"><svg><use href="#i-jcenter"/></svg></button>
							<button aria-label="Blocksatz rechts"><svg><use href="#i-jright"/></svg></button>
							<button class="group" aria-label="Blocksatz"><svg><use href="#i-jall"/></svg></button>
						</div>
						<div class="indents">
							<span><svg><use href="#i-indl"/></svg><a class="val" href="#">0</a> Px</span>
							<span><svg><use href="#i-before"/></svg><a class="val" href="#">0</a> Px</span>
							<span><svg><use href="#i-first-line"/></svg><a class="val" href="#">0</a> Px</span>
							<span><svg><use href="#i-indr"/></svg><a class="val" href="#">0</a> Px</span>
							<span><svg><use href="#i-after"/></svg><a class="val" href="#">0</a> Px</span>
						</div>
					</div>
				</section>
			</div>
		</div>
	</div>
</body>
</html>
```
FILE: styles.css
```css
*{
	box-sizing: border-box;
}
body{
	margin: 0;
	background: #fdfdfd;
	color: #bdbdbd;
	font: 11px/16px "Noto Sans", "Open Sans", sans-serif;
}
button, input, select{
	font: inherit;
	color: inherit;
	margin: 0;
	padding: 0;
	border: 0;
	background: none;
}
a{
	color: inherit;
	text-decoration: none;
}
i{
	font-style: normal;
	flex: none;
}
svg{
	width: 16px;
	height: 16px;
	fill: currentColor;
	flex: none;
	display: block;
}
.sprite{
	position: absolute;
	width: 0;
	height: 0;
}
.window{
	min-height: 100vh;
	display: flex;
	flex-direction: column;
	padding: 0 4px 7px 6px;
	border-top: 1px solid #bdbdc0;
}

/* Titel und Menü */
.titlebar{
	height: 29px;
	display: grid;
	grid-template-columns: 1fr auto 1fr;
	color: #333;
}
.titlebar h1{
	margin: 0;
	font: 14px/29px "Open Sans", sans-serif;
}
.logo{
	width: 16px;
	height: 16px;
	margin: 6px 2px;
	background: #2a0f47;
	border: 1px solid #8d62bd;
	color: #c7a1f0;
	font: bold 9px/13px "Open Sans", sans-serif;
	text-align: center;
}
.winbtns{
	display: flex;
	justify-content: flex-end;
	align-items: flex-start;
}
.min{
	width: 8px;
	height: 3px;
	margin: 12px 18px 0 0;
	background: #222;
}
.max{
	width: 10px;
	height: 9px;
	margin: 6px 13px 0 0;
	border: 1px solid #222;
	border-top-width: 3px;
}
.close{
	width: 45px;
	height: 20px;
	background: #c75050;
	color: #fff;
	font-size: 10px;
}
.menubar{
	height: 21px;
	display: flex;
	gap: 14px;
	padding-left: 6px;
	background: #f4f6f8;
	border: 1px solid #d9dbdd;
	border-bottom: 0;
	color: #111;
	font: 11px/20px "Noto Sans", "Open Sans", sans-serif;
}
.app{
	flex: 1;
	display: flex;
	flex-direction: column;
	background: #131313;
	padding: 0 1px 1px;
}

/* Werkzeuge */
.toolbar{
	height: 26px;
	display: flex;
	align-items: center;
	background: #404040;
	padding: 0 4px;
	margin-bottom: 1px;
}
.grip{
	width: 3px;
	height: 11px;
	background: repeating-linear-gradient(#777 0 1px, #222 1px 2px);
}
.toolbar > .grip{
	height: 20px;
}
.tools{
	display: flex;
	align-items: center;
	gap: 3px;
	margin-left: 5px;
}
.tools button, .tlicons button, .aligns button{
	position: relative;
	height: 22px;
	width: 22px;
	display: flex;
	align-items: center;
	justify-content: center;
}
.tools .on, .tlicons .on, .aligns .on{
	background: #2c2c2c;
	border: 1px solid #0f0f0f;
}
.more::after{
	content: "";
	position: absolute;
	right: -1px;
	bottom: 2px;
	border: 2px solid transparent;
	border-right-color: #ccc;
	border-bottom-color: #ccc;
}
.tools .texttool{
	font: 21px/22px "Liberation Serif", serif;
}
.sep{
	width: 1px;
	height: 20px;
	margin: 0 2px;
	background: #1e1e1e;
}
.axes{
	display: flex;
	gap: 4px;
	margin: 0 6px 0 44px;
	color: #5f5f5f;
}
.axes svg{
	width: 13px;
	height: 13px;
}
.check{
	display: flex;
	align-items: center;
	gap: 5px;
}
.check input{
	appearance: none;
	width: 12px;
	height: 12px;
	background: #373737;
	border: 1px solid #161616;
}
.toolbar .check{
	margin-left: 7px;
}
.snap{
	margin-left: 1px;
}
.workspace{
	flex: 1;
	display: flex;
	align-items: center;
	justify-content: flex-end;
	gap: 8px;
}
.workspace .dd{
	width: 138px;
}
.workspace .search{
	width: 193px;
}
.sync{
	width: 20px;
	height: 12px;
	margin-right: 4px;
}

/* Auswahllisten und Suchfelder */
.dd{
	position: relative;
	display: flex;
	min-width: 0;
}
.dd select{
	appearance: none;
	width: 100%;
	height: 17px;
	padding: 0 18px 0 6px;
	background: linear-gradient(#4b4b4b, #3a3a3a);
	border: 1px solid #181818;
	line-height: 15px;
}
.dd::before{
	content: "";
	position: absolute;
	right: 17px;
	top: 3px;
	bottom: 3px;
	border-left: 1px solid #222;
	pointer-events: none;
}
.dd::after{
	content: "";
	position: absolute;
	right: 5px;
	top: 6px;
	border: 4px solid transparent;
	border-top: 5px solid #a6a6a6;
	border-bottom: 0;
	pointer-events: none;
}
.dd.light select{
	background: linear-gradient(90deg, #9c9c9c calc(100% - 18px), #111 0 calc(100% - 17px), #444 0);
	color: #111;
	padding-left: 3px;
}
.search{
	display: flex;
	align-items: center;
	height: 18px;
	background: #9d9d9d;
	border: 1px solid #0e0e0e;
	color: #111;
}
.search input{
	flex: 1;
	min-width: 0;
	padding-left: 4px;
}
.search svg{
	color: #333;
	margin-left: 2px;
}
.tri{
	width: 0;
	height: 0;
	border: 4px solid transparent;
	border-top: 5px solid #b4b4b4;
	border-bottom: 0;
}
.tri.up{
	border: 5px solid transparent;
	border-bottom-color: #b4b4b4;
	border-top: 0;
}
.tri.lt{
	border: 5px solid transparent;
	border-right: 6px solid #b4b4b4;
	border-left: 0;
}
.tri.rt{
	border: 5px solid transparent;
	border-left: 6px solid #b4b4b4;
	border-right: 0;
}
.search .tri{
	border-top-color: #111;
}

/* Bedienfelder */
.upper{
	flex: 1;
	display: flex;
	gap: 4px;
	padding-top: 1px;
}
.lower{
	display: flex;
	gap: 4px;
	margin-top: 4px;
}
.col{
	width: 320px;
	display: flex;
	flex-direction: column;
}
.side{
	width: 214px;
	gap: 6px;
}
.panel{
	background: #404040;
	display: flex;
	flex-direction: column;
	min-width: 0;
}
.strip{
	height: 4px;
	margin-bottom: 2px;
}
.strip i{
	display: block;
	width: 70%;
	height: 4px;
	background: #454545;
}
.side .strip{
	margin: -1px 0 -3px;
}
.side .strip i{
	width: 88%;
}
.tabs{
	display: flex;
	height: 19px;
	background: linear-gradient(#383838, #2c2c2c);
	border-bottom: 1px solid #161616;
	color: #7c7c7c;
}
.tab{
	display: flex;
	align-items: center;
	padding: 0 11px;
	border-right: 1px solid #161616;
	white-space: nowrap;
	overflow: hidden;
}
.tab.active{
	flex: none;
	height: 19px;
	gap: 4px;
	padding: 0 5px 0 3px;
	background: linear-gradient(#4c4c4c, #404040);
	color: #bdbdbd;
}
.x{
	width: 10px;
	color: #d0d0d0;
	font-size: 13px;
	line-height: 16px;
}
.pmenu{
	margin: 0 11px 0 auto;
	color: #c0c0c0;
}
.pmenu svg{
	height: 10px;
}
.tabs .end{
	margin: 4px 3px 0 0;
	border-right: 0;
}
.chip{
	display: block;
	width: 10px;
	height: 10px;
	background: #5c5c5c;
	outline: 1px solid #333;
}
.red{ background: #b33a3a; }
.yellow{ background: #dcd850; }
.lilac{ background: #aaa6cc; }
.tan{ background: #a89a7b; }
.foot{
	display: flex;
	align-items: center;
	border-top: 1px solid #1c1c1c;
}
.twist{
	width: 0;
	height: 0;
	border: 4px solid transparent;
	border-left: 6px solid #8b8b8b;
	border-right: 0;
}
.twist.none{
	border-color: transparent;
}
.boxed{
	background: #222;
	outline: 2px solid #222;
}
.val{
	color: #c39a2c;
	border-bottom: 1px dotted #c39a2c;
	line-height: 13px;
}
.val.dim{
	color: #6a6a6a;
	border-color: #6a6a6a;
}

/* Projekt */
.project{
	flex: 1;
}
.fx{
	flex: 1;
	gap: 22px;
	padding-right: 0;
}
.fx + .pmenu{
	margin-left: 6px;
}
.preview{
	height: 113px;
}
.project .search{
	margin: 0 7px 8px 7px;
}
.list{
	position: relative;
	flex: 1;
	border-top: 1px solid #161616;
	margin: 0 1px;
	overflow: hidden;
}
table{
	width: 100%;
	table-layout: fixed;
	border-collapse: collapse;
}
th, td{
	padding: 0;
	text-align: left;
	font-weight: normal;
	white-space: nowrap;
	overflow: hidden;
}
th{
	height: 18px;
	font-size: 9px;
	background: linear-gradient(#4a4a4a, #3c3c3c);
	border-bottom: 1px solid #161616;
}
.list td{
	height: 19px;
	border-bottom: 1px solid #363636;
}
.list th:nth-child(n+3),
.list td:nth-child(n+3){
	padding-left: 5px;
}
.c-label{ width: 22px; }
.c-type{ width: 76px; }
.c-size{ width: 32px; }
.namehead{
	display: flex;
	align-items: center;
	justify-content: space-between;
	padding: 0 5px 0 20px;
}
.tag{
	width: 14px;
	height: 13px;
	margin-left: 2px;
	color: #d0d0d0;
}
.list td .chip{
	margin-left: 4px;
}
.file{
	display: flex;
	align-items: center;
	gap: 4px;
	padding-left: 5px;
}
.file svg{
	height: 15px;
}
.scrolly{
	position: absolute;
	top: 18px;
	right: 0;
	bottom: 0;
	width: 17px;
	display: flex;
	flex-direction: column;
	align-items: center;
	background: #3a3a3a;
	border-left: 1px solid #161616;
}
.scrolly svg{
	width: 14px;
}
.scrolly .tri{
	opacity: .4;
	margin: 8px 0 4px;
}
.scrolly .tri:last-child{
	margin-top: auto;
}
.project .foot{
	height: 19px;
	gap: 9px;
	padding-left: 5px;
}
.project .foot span{
	margin-left: -2px;
}
.trash{
	width: 12px;
	height: 14px;
	margin-left: auto;
}
.scrollx{
	display: flex;
	align-items: center;
	justify-content: space-between;
	align-self: stretch;
	width: 123px;
	margin-right: 18px;
	padding: 0 4px;
	background: #3a3a3a;
	border-left: 1px solid #161616;
	border-right: 1px solid #161616;
}
.scrollx .thumb{
	align-self: stretch;
	width: 26px;
	margin: 0 auto 0 7px;
	border: 1px solid #161616;
	background: #404040;
}

/* Komposition */
.comp{
	flex: 1;
}
.comp .tab{
	width: 147px;
	justify-content: center;
}
.comp .tab.wide{
	width: 194px;
}
.comp .tab.active{
	width: 209px;
}
.tab.active .dd{
	flex: 1;
}
.tab.active select{
	padding-left: 4px;
}
.comp .lock{
	width: 12px;
	height: 12px;
}
.crumbs{
	height: 26px;
	display: flex;
	align-items: center;
	padding: 0 0 1px 19px;
	border-bottom: 1px solid #222;
}
.crumbs a{
	margin-right: 14px;
}
.crumbs .here{
	margin-right: 6px;
	padding: 0 8px;
	height: 16px;
	line-height: 14px;
	background: #2d2d2d;
	border: 1px solid #111;
}
.crumbs .tri{
	border-width: 3px;
	border-right-width: 4px;
	margin-right: 14px;
}
.viewer{
	flex: 1;
	display: flex;
	align-items: center;
	justify-content: center;
}
.canvas{
	width: 640px;
	height: 360px;
	display: flex;
	align-items: center;
	justify-content: center;
	background: #0090ff;
	color: #cfe650;
	text-align: center;
}
.canvas p{
	margin: 0;
	font: 300 36px/52px "Liberation Sans Narrow", "Roboto Condensed", "Open Sans Condensed", "Roboto", sans-serif;
}
.comp > .foot{
	height: 25px;
	gap: 6px;
	padding: 0 6px 0 4px;
	justify-content: space-between;
}
.comp > .foot svg{
	width: 14px;
	height: 14px;
}
.comp > .foot .shutter{
	width: 16px;
}
.off{
	color: #666;
}
.time{
	height: 17px;
	padding: 0 6px;
	line-height: 15px;
	background: #3f3f3f;
	border: 1px solid #181818;
}
.zoomsel{ width: 68px; }
.ressel{ width: 85px; }
.camsel{ width: 103px; }
.viewsel{ width: 68px; }

/* Audio */
.audio .tab:first-child{
	padding-right: 15px;
}
.mixer{
	display: flex;
	height: 120px;
	padding: 9px 0 6px 10px;
}
.meter{
	display: flex;
	flex-direction: column;
	gap: 4px;
	width: 25px;
}
.peak{
	height: 3px;
	background: #000;
}
.bar{
	flex: 1;
	background: linear-gradient(90deg, transparent 12px, #000 12px 13px, transparent 13px), linear-gradient(#7a2f24, #77671f 20%, #1f6b24 42%, #1c3a1e 80%);
}
.scale{
	display: flex;
	flex-direction: column;
	justify-content: space-between;
	width: 44px;
	padding: 5px 0 0 8px;
	font-size: 10px;
	line-height: 12px;
}
.scale.db{
	width: auto;
	padding: 4px 0 14px 5px;
}
.faders{
	display: flex;
	gap: 3px;
	padding: 8px 0 0 5px;
	color: #666;
}
.faders label{
	width: 20px;
	text-align: center;
}
.faders span{
	border-bottom: 1px dotted #666;
	line-height: 12px;
}
.faders input{
	appearance: none;
	display: block;
	writing-mode: vertical-lr;
	width: 20px;
	height: 76px;
	margin-bottom: 5px;
	background: linear-gradient(90deg, transparent 8px, #2a2a2a 8px 9px, #444 9px 11px, #2a2a2a 11px 12px, transparent 12px);
}
.faders input::-webkit-slider-thumb{
	appearance: none;
	width: 20px;
	height: 10px;
	background: #4b4b4b;
	clip-path: polygon(25% 0, 75% 0, 100% 50%, 75% 100%, 25% 100%, 0 50%);
}
.faders .l::-webkit-slider-thumb{
	clip-path: polygon(35% 0, 80% 0, 80% 100%, 35% 100%, 0 50%);
}
.faders .r::-webkit-slider-thumb{
	clip-path: polygon(20% 0, 65% 0, 100% 50%, 65% 100%, 20% 100%);
}

/* Vorschau */
.body{
	padding: 9px 7px;
}
.vorschau .body{
	height: 129px;
}
.transport{
	display: flex;
	justify-content: space-between;
	padding: 0 6px 8px 3px;
	border-bottom: 1px solid #222;
	margin-bottom: 4px;
}
.transport svg{
	width: 14px;
	height: 12px;
}
.transport button:nth-child(6){
	margin-left: 6px;
}
.fields{
	display: grid;
	grid-template-columns: 63px 40px 78px;
	gap: 3px 9px;
	margin: 4px 0;
}
.fields .dd select{
	padding-right: 0;
}
.checks{
	display: flex;
	gap: 7px;
	white-space: nowrap;
}
.checks .check{
	gap: 4px;
}

/* Zeichen */
.zeichen{
	flex: 1;
}
.zeichen .body{
	padding: 9px 6px 4px;
}
.zeichen .tab:first-child{
	padding-right: 15px;
}
.zeichen .tab.active{
	padding-right: 0;
}
.zeichen .pmenu{
	margin-left: 2px;
}
.font{
	display: flex;
	gap: 6px;
	padding-bottom: 5px;
	border-bottom: 1px solid #222;
}
.fontsel{
	width: 121px;
	display: flex;
	flex-direction: column;
	gap: 7px;
}
.picks{
	display: flex;
	flex-direction: column;
	gap: 8px;
}
.bw{
	width: 19px;
	height: 16px;
	background: linear-gradient(#000 50%, #fff 50%);
	border: 1px solid #222;
}
.colors{
	position: relative;
	width: 44px;
	height: 43px;
}
.colors i, .colors svg{
	position: absolute;
}
.fill{
	left: 0;
	top: 0;
	width: 30px;
	height: 29px;
	background: #5e0b0d;
	border: 1px solid #222;
}
.stroke{
	right: 0;
	bottom: 0;
	width: 30px;
	height: 30px;
	background: #404040;
	border: 9px solid #e6e6e6;
}
.swap{
	right: 0;
	top: 0;
	width: 11px;
	height: 11px;
}
.nofill{
	left: 0;
	bottom: 0;
	width: 10px;
	height: 10px;
}
.metrics{
	display: grid;
	grid-template-columns: 25px 42px 38px 31px 44px auto;
	align-items: center;
	row-gap: 3px;
	padding: 2px 0 6px;
	border-bottom: 1px solid #222;
}
.metrics svg{
	width: 18px;
	height: 18px;
}
.stroke-row{
	border: 0;
	padding: 4px 0 0;
	grid-template-columns: 25px 42px 16px 113px;
}

/* Zeitleiste */
.timeline{
	flex: 1;
	position: relative;
	border: 1px solid #a98526;
	border-top: 0;
}
.timeline .tabs{
	height: 20px;
	border-bottom-color: #a98526;
}
.timeline .tab{
	padding: 0 13px;
}
.timeline .tab.active{
	height: 20px;
	border-top: 1px solid #a98526;
	border-right-color: #a98526;
	padding: 0 2px 0 3px;
}
.tl{
	display: flex;
}
.layers{
	flex: 1;
	min-width: 0;
}
.tlbar{
	height: 37px;
	display: flex;
	align-items: center;
	border-bottom: 1px solid #161616;
}
.clock{
	width: 105px;
	padding-left: 10px;
	display: flex;
	flex-direction: column;
	color: #c0911e;
	white-space: nowrap;
}
.clock b{
	font-size: 17px;
	line-height: 18px;
	align-self: flex-start;
	border-bottom: 1px dotted #c0911e;
}
.clock span{
	font-size: 9px;
	line-height: 13px;
	padding-left: 2px;
}
.tlbar .search{
	flex: 1;
}
.tlicons{
	display: flex;
	align-items: center;
	gap: 9px;
	width: 229px;
	padding-left: 13px;
}
.tlicons svg{
	width: 20px;
	height: 18px;
}
.tlicons .on{
	height: 24px;
	width: 24px;
	flex: none;
	margin: 0 0 0 -5px;
}
.tlicons button:nth-child(2){
	margin: 0 6px 0 3px;
}
.tlicons button:nth-child(3),
.tlicons button:nth-child(4){
	margin-right: -4px;
}
.layerlist{
	position: relative;
	height: 92px;
	overflow: hidden;
	background: #3a3a3a;
}
.l-av{ width: 69px; }
.l-label{ width: 31px; }
.l-nr{ width: 32px; }
.l-sw{ width: 226px; }
.l-parent{ width: 134px; }
.layerlist th:nth-child(n+3){
	padding-left: 6px;
	background: linear-gradient(#1e1e1e, #1e1e1e) 0 4px/1px 11px no-repeat, linear-gradient(#4a4a4a, #3c3c3c);
}
.layerlist th:nth-child(5){
	padding-left: 0;
}
.layerlist td{
	height: 17px;
	line-height: 15px;
	font-weight: bold;
	border-bottom: 1px solid #484848;
}
.layerlist td:nth-child(3){
	padding-left: 6px;
}
.tagcell .tag{
	margin-left: 13px;
}
.sw{
	display: flex;
	gap: 2px;
	padding-left: 4px;
}
.sw svg, .sw i, .sw em{
	width: 13px;
	height: 13px;
}
.sw em{
	font: italic 13px/12px "Liberation Serif", serif;
	text-align: center;
}
.sw .b{
	border-bottom: 1px solid #8a8a8a;
	border-left: 1px solid #2c2c2c;
}
.lab{
	display: flex;
	align-items: center;
	gap: 6px;
	padding-left: 5px;
}
.lname{
	display: flex;
	align-items: center;
	gap: 6px;
	padding-left: 3px;
}
.solid{
	width: 13px;
	height: 13px;
	background: #fff;
	border: 1px solid #222;
}
.parent{
	display: flex;
	align-items: center;
	gap: 5px;
	padding-left: 6px;
	font-weight: normal;
}
.parent svg{
	width: 13px;
	height: 13px;
}
.parent .dd{
	width: 89px;
}
.parent select{
	height: 15px;
	line-height: 13px;
}
.parent .dd::after{
	top: 5px;
}
.watermark{
	position: absolute;
	left: 58px;
	top: 22px;
	display: flex;
	align-items: center;
	opacity: .6;
	color: #d4d4d4;
	font: bold 21px/24px "Liberation Sans", sans-serif;
}
.watermark svg{
	width: 64px;
	height: 58px;
	margin-right: -10px;
}
.watermark span{
	padding-top: 36px;
}
.timeline .foot{
	height: 18px;
	gap: 6px;
	padding-left: 5px;
}
.timeline .foot svg{
	width: 13px;
	height: 13px;
}
.toggle{
	width: 224px;
	height: 15px;
	margin: 0 134px 0 auto;
	background: linear-gradient(#4b4b4b, #3a3a3a);
	border: 1px solid #181818;
	font-size: 9px;
	line-height: 12px;
}
.graph{
	position: relative;
	flex: 0 0 27%;
	border-left: 1px solid #161616;
	overflow: hidden;
}
.nav{
	position: relative;
	height: 10px;
	margin: 5px 6px 0 0;
	background: #55554a;
}
.view{
	display: block;
	width: 57%;
	height: 10px;
	background: #999;
	border: solid #d0a02a;
	border-width: 0 7px;
	outline: 1px solid #161616;
	outline-offset: -1px;
}
.now{
	position: absolute;
	left: 12%;
	top: 0;
	width: 2px;
	height: 10px;
	background: #d05048;
}
.ruler{
	position: relative;
	height: 20px;
}
.ruler span{
	position: absolute;
	top: 0;
	margin-left: -12px;
	font-size: 10px;
}
.area{
	display: flex;
	height: 17px;
	background: #747474;
	border: 1px solid #161616;
}
.handle{
	width: 6px;
	background: linear-gradient(90deg, #d0a02a 2px, #40300a 2px 3px, #d0a02a 3px);
}
.cache{
	position: relative;
	height: 3px;
	background: #2c352c;
}
.cache i{
	position: absolute;
	top: 0;
	height: 3px;
	background: #2fa336;
}
.tracks{
	position: relative;
	height: 74px;
	overflow: hidden;
	background: linear-gradient(90deg, #3a3a3a 3%, #474747 3%);
}
.clip{
	position: absolute;
	height: 16px;
	background: #7d799a;
	border-top: 1px solid #8d89aa;
}
.playhead{
	position: absolute;
	left: 17%;
	top: 20px;
	bottom: 18px;
	display: flex;
	flex-direction: column;
	align-items: center;
}
.playhead svg{
	width: 12px;
	height: 14px;
}
.playhead i{
	flex: 1;
	width: 2px;
	background: #b82222;
}
.timeline .graph .foot svg{
	width: 16px;
	height: 8px;
}
.timeline .graph .foot .small{
	width: 10px;
	height: 5px;
	margin-right: 9px;
}
.tlzoom{
	appearance: none;
	width: 44px;
	height: 8px;
	margin-right: 6px;
	background: linear-gradient(#161616, #161616) 0 3px/100% 3px no-repeat;
}
.tlzoom::-webkit-slider-thumb{
	appearance: none;
	width: 8px;
	height: 8px;
	background: #4a4a4a;
	border: 1px solid #161616;
}
.graph .scrollx{
	flex: 1;
	margin: 0;
}
.graph .thumb{
	width: 73px;
}
.edge{
	width: 17px;
	display: flex;
	flex-direction: column;
	align-items: center;
	padding: 35px 0 18px;
	border-left: 1px solid #161616;
	gap: 6px;
}
.edge svg{
	width: 13px;
	height: 15px;
}
.rail{
	flex: 1;
	align-self: stretch;
	display: flex;
	flex-direction: column;
	align-items: center;
	justify-content: space-between;
	padding: 4px 0;
	background: #3a3a3a;
	border: solid #161616;
	border-width: 1px 0;
}

/* Absatz */
.absatz{
	width: 206px;
}
.aligns{
	display: flex;
	gap: 5px;
	padding-bottom: 4px;
	border-bottom: 1px solid #222;
}
.absatz .body{
	padding: 6px 20px 0 7px;
}
.aligns button{
	width: 20px;
}
.aligns .group{
	margin-left: 5px;
}
.aligns svg{
	height: 15px;
}
.indents{
	display: grid;
	grid-template-columns: 71px 65px auto;
	row-gap: 2px;
	padding-top: 3px;
	margin-right: -20px;
}
.indents span{
	display: flex;
	align-items: center;
	gap: 4px;
}
.indents svg{
	width: 18px;
	height: 12px;
}
```
